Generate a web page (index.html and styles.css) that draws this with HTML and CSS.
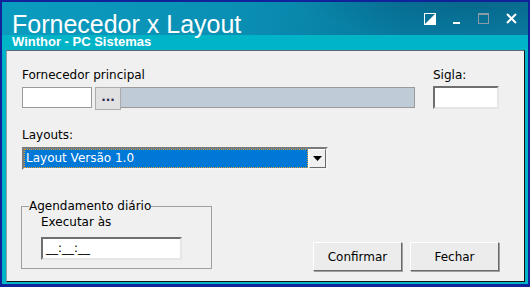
FILE: index.html
```html
<!DOCTYPE html>
<html lang="pt-BR">
<head>
    <meta charset="UTF-8">
    <title>Fornecedor x Layout</title>
    <link rel="stylesheet" href="styles.css">
</head>
<body>
    <div class="window">
        <div class="titlebar">
            <div class="title-top">
                <h1>Fornecedor x Layout</h1>
                <div class="controls">
                    <svg class="ctl" width="12" height="12" viewBox="0 0 12 12"><rect x="0.5" y="0.5" width="11" height="11" fill="none" stroke="#fff"/><polygon points="1,11 11,1 11,11" fill="#fff"/></svg>
                    <svg class="ctl" width="8" height="12" viewBox="0 0 8 12"><rect x="0" y="9" width="7" height="2" fill="#fff"/></svg>
                    <svg class="ctl" width="11" height="11" viewBox="0 0 11 11"><rect x="0.5" y="0.5" width="10" height="10" fill="none" stroke="#8a9aa6"/><rect x="0" y="0" width="11" height="2" fill="#8a9aa6"/></svg>
                    <svg class="ctl" width="11" height="11" viewBox="0 0 11 11"><path d="M1 1 L10 10 M10 1 L1 10" stroke="#fff" stroke-width="2"/></svg>
                </div>
            </div>
            <div class="subtitle">Winthor - PC Sistemas</div>
        </div>
        <div class="content">
            <div class="row-top">
                <div class="field-main">
                    <label>Fornecedor principal</label>
                    <div class="lookup">
                        <input class="code" type="text">
                        <button class="dots">...</button>
                        <div class="desc"></div>
                    </div>
                </div>
                <div class="field-sigla">
                    <label>Sigla:</label>
                    <input class="sigla" type="text">
                </div>
            </div>
            <label class="lbl-layout">Layouts:</label>
            <div class="combo">
                <span class="combo-value">Layout Versão 1.0</span>
                <span class="combo-btn"><svg width="9" height="5" viewBox="0 0 9 5"><polygon points="0,0 9,0 4.5,5" fill="#000"/></svg></span>
            </div>
            <div class="row-bottom">
                <fieldset class="group">
                    <legend>Agendamento diário</legend>
                    <div class="exec-label">Executar às</div>
                    <div class="time">__:__:__</div>
                </fieldset>
                <div class="actions">
                    <button class="btn">Confirmar</button>
                    <button class="btn">Fechar</button>
                </div>
            </div>
        </div>
    </div>
</body>
</html>
```

FILE: styles.css
```css
body {
    margin: 0;
    font-family: "DejaVu Sans", sans-serif;
    font-size: 12px;
}
.window {
    width: 530px;
    height: 287px;
    box-sizing: border-box;
    border: 2px solid #10239a;
    border-bottom-width: 3px;
    background: #00b4c8;
    display: flex;
    flex-direction: column;
}
.titlebar {
    height: 48px;
    display: flex;
    flex-direction: column;
}
.title-top {
    height: 33px;
    display: flex;
    justify-content: space-between;
    background:
        radial-gradient(ellipse 260px 70px at 470px -10px, rgba(0, 60, 90, 0.35), transparent 70%),
        linear-gradient(100deg, #0a9cc0 0%, #0a8fb3 45%, #087aa0 75%, #0a7aa0 100%);
}
.titlebar h1 {
    margin: 0;
    padding: 11px 0 0 10px;
    font-family: "Liberation Sans", Arial, sans-serif;
    font-weight: normal;
    font-size: 25px;
    line-height: 22px;
    color: #fff;
}
.controls {
    display: flex;
    align-items: flex-start;
    padding: 11px 11px 0 0;
}
.ctl {
    margin-left: 17px;
}
.subtitle {
    padding-left: 10px;
    font-family: "Liberation Sans", Arial, sans-serif;
    font-weight: bold;
    font-size: 13px;
    line-height: 13px;
    color: #fff;
}
.content {
    flex: 1;
    margin: 0 3px 2px 4px;
    background: #f0f0f0;
    border: 1px solid #101010;
    border-left-color: #8fa0a8;
    border-top-color: #5a6a70;
    padding: 17px 0 0 15px;
}
label, .exec-label {
    display: block;
    color: #000;
    line-height: 14px;
}
.row-top {
    display: flex;
}
.field-main label {
    margin-bottom: 5px;
}
.lookup {
    display: flex;
    align-items: flex-start;
}
input {
    box-sizing: border-box;
    background: #fff;
    margin: 0;
    padding: 0;
    font: inherit;
}
.code {
    width: 70px;
    height: 21px;
    border: 1px solid #9a9a9a;
}
.dots {
    width: 26px;
    height: 23px;
    margin-left: 3px;
    border: 1px solid #acacac;
    background: #e1e1e1;
    font: inherit;
    font-weight: bold;
    color: #2a2a50;
    padding: 0 0 4px;
}
.desc {
    width: 293px;
    height: 19px;
    border: 1px solid #9a9a9a;
    border-left: none;
    background: #bfccd8;
}
.field-sigla {
    margin-left: 18px;
}
.field-sigla label {
    margin-bottom: 4px;
}
.sigla {
    width: 66px;
    height: 23px;
    border: 2px solid #6f6f6f;
    border-right-color: #e6e6e6;
    border-bottom-color: #e6e6e6;
}
.lbl-layout {
    margin-top: 18px;
    margin-bottom: 5px;
}
.combo {
    width: 306px;
    height: 23px;
    box-sizing: border-box;
    border: 2px solid #7a7a7a;
    border-right-color: #f4f4f4;
    border-bottom-color: #f4f4f4;
    background: #fff;
    display: flex;
}
.combo-value {
    flex: 1;
    background: #0078d7;
    color: #fff;
    outline: 1px dotted #e0a030;
    outline-offset: -1px;
    padding-left: 2px;
    line-height: 19px;
    font-size: 12px;
}
.combo-btn {
    width: 17px;
    margin-left: 1px;
    box-sizing: border-box;
    background: #f0f0f0;
    border: 1px solid #fff;
    border-right-color: #6a6a6a;
    border-bottom-color: #6a6a6a;
    display: flex;
    align-items: center;
    justify-content: center;
}
.row-bottom {
    display: flex;
    align-items: flex-end;
    margin-top: 29px;
}
.group {
    width: 191px;
    height: 70px;
    box-sizing: border-box;
    margin: 0 0 0 -1px;
    padding: 0 0 0 19px;
    border: 1px solid #a0a0a0;
}
.group legend {
    padding: 0;
    margin-left: -12px;
    line-height: 14px;
}
.exec-label {
    margin-top: 2px;
}
.time {
    margin-top: 8px;
    width: 141px;
    height: 23px;
    box-sizing: border-box;
    border: 2px solid #6f6f6f;
    border-right-color: #e6e6e6;
    border-bottom-color: #e6e6e6;
    background: #fff;
    padding-left: 3px;
    line-height: 19px;
    color: #000;
}
.actions {
    display: flex;
    margin-left: 101px;
    margin-bottom: -2px;
}
.btn {
    width: 89px;
    height: 29px;
    margin-right: 8px;
    border: 1px solid #fff;
    border-right-color: #6a6a6a;
    border-bottom-color: #6a6a6a;
    box-shadow: 1px 1px 0 #a0a0a0;
    background: #ececec;
    font: inherit;
    color: #000;
}
```
